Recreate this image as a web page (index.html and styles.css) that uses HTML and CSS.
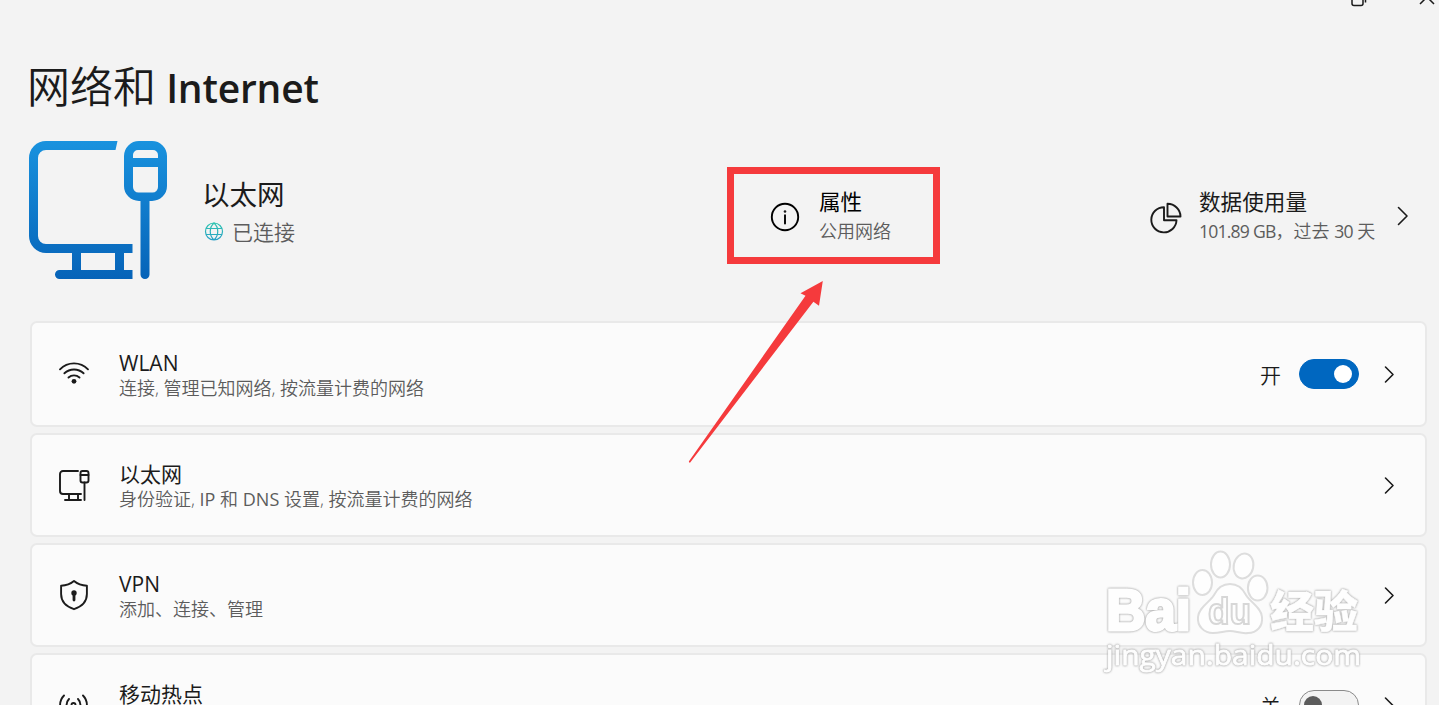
FILE: index.html
```html
<!DOCTYPE html>
<html lang="zh-CN">
<head>
    <meta charset="UTF-8">
    <meta name="viewport" content="width=device-width, initial-scale=1.0">
    <title>网络和 Internet</title>
    <link rel="stylesheet" href="styles.css">
</head>

<body>

<!-- 窗口按钮 -->
<div class="titlebar">
    <svg class="window-button" width="18" height="18" viewBox="0 0 18 18">
        <rect x="2" y="4" width="11" height="12.5" rx="2"/>
        <path d="M5 1.5h8a2.5 2.5 0 0 1 2.5 2.5v9.5"/>
    </svg>
    <svg class="window-button" width="18" height="18" viewBox="0 0 18 18">
        <path d="M2 2l14 14M16 2L2 16"/>
    </svg>
</div>

<main class="page">
    <h1>网络和 <span class="latin">Internet</span></h1>

    <!-- 当前连接状态 -->
    <section class="status">
        <svg class="status-icon" width="138" height="138" viewBox="0 0 138 138">
            <defs>
                <linearGradient id="blue" gradientUnits="userSpaceOnUse" x1="0" y1="0" x2="0" y2="138">
                    <stop offset="0" stop-color="#1992de"/>
                    <stop offset="1" stop-color="#0663b8"/>
                </linearGradient>
            </defs>
            <g fill="url(#blue)">
                <path d="M88.500 0H17A17 17 0 0 0 0 17V95a17 17 0 0 0 17 17H43v17H30.500a4.500 4.500 0 0 0 0 9H103.500v-9H95V112h8.500v-9H17a8 8 0 0 1-8-8V17a8 8 0 0 1 8-8H86.500zM52 112h34v17H52z"/>
                <path fill-rule="evenodd" d="M110 0h13a15 15 0 0 1 15 15v30a15 15 0 0 1-15 15h-2.500v73.500a4.500 4.500 0 0 1-9 0V60h-1.500a15 15 0 0 1-15-15V15a15 15 0 0 1 15-15zM104 17h25v-3a5 5 0 0 0-5-5h-15a5 5 0 0 0-5 5zM104 26v20a5.500 5.500 0 0 0 5.500 5.500h14a5.500 5.500 0 0 0 5.500-5.500V26z"/>
            </g>
        </svg>

        <div class="status-text">
            <div class="status-name">以太网</div>
            <div class="status-state">
                <svg width="20" height="20" viewBox="0 0 20 20">
                    <defs>
                        <linearGradient id="globe" x1="0" y1="0" x2="0" y2="1">
                            <stop offset="0" stop-color="#30c5b0"/>
                            <stop offset="1" stop-color="#279fc6"/>
                        </linearGradient>
                    </defs>
                    <path fill="none" stroke="url(#globe)" stroke-width="1.2" d="M1.500 9.500a8.500 8.500 0 1 0 17 0a8.500 8.500 0 1 0-17 0M2.500 6.500h15M2.500 12.500h15M10 1c-5 4.500-5 12.500 0 17M10 1c5 4.500 5 12.500 0 17"/>
                </svg>
                <span>已连接</span>
            </div>
        </div>

        <div class="tile tile-marked">
            <svg class="line-icon" width="30" height="30" viewBox="0 0 30 30">
                <circle cx="15" cy="15" r="13.200"/>
                <path d="M15 13.200v8.300"/>
                <circle class="solid" cx="15" cy="9.500" r="1.300"/>
            </svg>
            <div class="tile-text">
                <div class="tile-title">属性</div>
                <div class="tile-sub">公用网络</div>
            </div>
        </div>

        <div class="tile tile-usage">
            <svg class="line-icon" width="32" height="32" viewBox="0 0 32 32">
                <path d="M14 5.200A12.600 12.600 0 1 0 26.500 18.300H14z"/>
                <path d="M17.500 1.800A13 13 0 0 1 30.500 14.500H17.500z"/>
            </svg>
            <div class="tile-text">
                <div class="tile-title">数据使用量</div>
                <div class="tile-sub"><span class="amount">101.89 GB</span>，过去 <span class="amount">30</span> 天</div>
            </div>
            <svg class="chevron" width="12" height="20" viewBox="0 0 12 20"><path d="M1.500 1.500L10 10l-8.500 8.500"/></svg>
        </div>
    </section>

    <!-- 设置列表 -->
    <section class="list">
        <div class="card card-first">
            <svg class="line-icon" width="32" height="32" viewBox="0 0 32 32">
                <path d="M2 11.300a19.500 19.500 0 0 1 28 0M6.400 15.300a14 14 0 0 1 19.200 0M10.500 19.500a8.200 8.200 0 0 1 11 0"/>
                <circle class="solid" cx="16" cy="23.300" r="2.400"/>
            </svg>
            <div class="card-text">
                <div class="card-title">WLAN</div>
                <div class="card-sub">连接, 管理已知网络, 按流量计费的网络</div>
            </div>
            <span class="switch-label">开</span>
            <span class="switch switch-on"></span>
            <svg class="chevron" width="12" height="18" viewBox="0 0 12 18"><path d="M2.500 2L10 9.500L2.500 17"/></svg>
        </div>

        <div class="card">
            <svg class="line-icon" width="32" height="32" viewBox="0 0 32 32">
                <path d="M20 2H5a3 3 0 0 0-3 3v17a3 3 0 0 0 3 3h18M11 25v6M20 25v6M7 31h16"/>
                <rect x="22.500" y="2" width="8" height="11.500" rx="2"/>
                <path d="M22.500 6h8M26.500 13.500V31"/>
            </svg>
            <div class="card-text">
                <div class="card-title">以太网</div>
                <div class="card-sub">身份验证, <span class="term">IP</span> 和 <span class="term">DNS</span> 设置, 按流量计费的网络</div>
            </div>
            <svg class="chevron" width="12" height="18" viewBox="0 0 12 18"><path d="M2.500 2L10 9.500L2.500 17"/></svg>
        </div>

        <div class="card">
            <svg class="line-icon" width="32" height="32" viewBox="0 0 32 32">
                <path d="M16 2c3.500 3 8 4.500 12.900 4.700V15c0 7.500-5 12.500-12.900 15.200C8.100 27.500 3.100 22.500 3.100 15V6.700C8 6.500 12.500 5 16 2z"/>
                <circle class="solid" cx="16" cy="14" r="2.700"/>
                <path class="key" d="M16 15v6"/>
            </svg>
            <div class="card-text">
                <div class="card-title">VPN</div>
                <div class="card-sub">添加、连接、管理</div>
            </div>
            <svg class="chevron" width="12" height="18" viewBox="0 0 12 18"><path d="M2.500 2L10 9.500L2.500 17"/></svg>
        </div>

        <div class="card">
            <svg class="line-icon" width="32" height="32" viewBox="0 0 32 32">
                <path d="M6 6.500a13.500 13.500 0 0 0 0 19M25 6.500a13.500 13.500 0 0 1 0 19M11 10a8.500 8.500 0 0 0 0 12M20 10a8.500 8.500 0 0 1 0 12"/>
                <circle cx="15.500" cy="16" r="2"/>
            </svg>
            <div class="card-text">
                <div class="card-title">移动热点</div>
            </div>
            <span class="switch-label">关</span>
            <span class="switch"></span>
            <svg class="chevron" width="12" height="18" viewBox="0 0 12 18"><path d="M2.500 2L10 9.500L2.500 17"/></svg>
        </div>
    </section>
</main>

<!-- 指向“属性”的箭头 -->
<svg class="arrow" width="136" height="184" viewBox="0 0 136 184">
    <path d="M134.800 1L112.500 13.300L117.500 15.800L0.800 181.500L1.800 183L125.400 21.700L131 25.700z"/>
</svg>

<!-- 水印 -->
<svg class="watermark" width="270" height="132" viewBox="0 0 270 132">
    <g class="mark">
        <text class="mark-bai" x="6" y="82" textLength="85" lengthAdjust="spacingAndGlyphs">Bai</text>
        <ellipse cx="102.500" cy="34.500" rx="9.500" ry="12.500"/>
        <ellipse cx="120.500" cy="16.500" rx="9.500" ry="13"/>
        <ellipse cx="143.500" cy="18" rx="9.800" ry="12.500" transform="rotate(12 143.500 18)"/>
        <ellipse cx="157.700" cy="40" rx="9.800" ry="12.500"/>
        <path d="M130 36c-8 0-13 5-16 11-4 7-15 12-16 22-1 9 6 16 15 16 7 0 11-2 17-2s11 3 18 2c9 0 15-7 14-16-1-10-12-15-16-22-3-6-8-11-16-11z"/>
        <text class="mark-du" x="108" y="76" textLength="43" lengthAdjust="spacingAndGlyphs">du</text>
        <text class="mark-cn" x="170" y="80" textLength="88" lengthAdjust="spacingAndGlyphs">经验</text>
        <text class="mark-url" x="6" y="117" textLength="255" lengthAdjust="spacingAndGlyphs">jingyan.baidu.com</text>
    </g>
</svg>

</body>
</html>
```
FILE: styles.css
```css
* {
    box-sizing: border-box;
}

body {
    margin: 0;
    height: 705px;
    overflow: hidden;
    position: relative;
    background-color: #f3f3f3;
    color: #1b1b1b;
    font-family: "Open Sans", "Noto Sans CJK SC", sans-serif;
}

svg {
    display: block;
    flex: none;
    overflow: visible;
}

/* 窗口右上角，只露出按钮的下半部分 */
.titlebar {
    display: flex;
    justify-content: flex-end;
    gap: 50px;
    height: 6px;
    padding-right: 3px;
    align-items: flex-end;
}

.window-button {
    fill: none;
    stroke: #1b1b1b;
    stroke-width: 1.5;
}

.window-button:first-child {
    margin-bottom: -1px;
}

.page {
    height: 699px;
    overflow: hidden;
    padding: 52px 12px 0 30px;
}

h1 {
    margin: -1px 0 0 -3px;
    height: 84px;
    line-height: 60px;
    font-size: 43px;
    font-weight: 350;
    white-space: nowrap;
}

.latin {
    margin-left: -1px;
    font-weight: 600;
    font-size: 39px;
    letter-spacing: -0.2px;
}

/* 状态区 */
.status {
    display: flex;
    height: 180px;
    margin-left: -1px;
}

.status-text {
    width: 524px;
    padding: 34px 0 0 35px;
}

.status-name {
    font-size: 27.500px;
    line-height: 40px;
}

.status-state {
    display: flex;
    align-items: center;
    gap: 8px;
    font-size: 21px;
    line-height: 34px;
    color: #5c5c5c;
    font-weight: 350;
    padding-left: 2px;
}

.tile {
    display: flex;
    white-space: nowrap;
}

.tile-marked {
    width: 213px;
    height: 97px;
    margin: 26px 0 0 36px;
    padding: 14px 0 0 36px;
    border: 7px solid #f53a3c;
    color: #000;
}

.tile-marked .line-icon {
    margin: 14px 19px 0 0;
    stroke: #000;
}

.tile-usage {
    padding: 47px 0 0 210px;
}

.tile-usage .line-icon {
    margin: 14px 17px 0 0;
}

.tile-text {
    flex: none;
}

.tile-usage .tile-text {
    width: 180px;
}

.tile-usage .chevron {
    margin: 18px 0 0 18px;
}

.tile-title {
    font-size: 21.6px;
    line-height: 28px;
}

.tile-sub {
    font-size: 18px;
    line-height: 30px;
    color: #5c5c5c;
    font-weight: 350;
}

.amount {
    font-size: 17.600px;
    font-weight: 400;
    letter-spacing: -0.8px;
}

.term {
    font-weight: 400;
}

/* 图标 */
.line-icon,
.chevron {
    fill: none;
    stroke: #1b1b1b;
    stroke-width: 1.9;
    stroke-linecap: round;
    stroke-linejoin: round;
}

.chevron {
    stroke-width: 1.6;
}

.solid {
    fill: #1b1b1b;
    stroke: none;
}

.key {
    stroke-width: 2.8;
}

/* 卡片列表 */
.list {
    display: flex;
    flex-direction: column;
    gap: 6px;
}

.card {
    display: flex;
    align-items: center;
    flex: none;
    height: 104px;
    padding: 0 30px 0 26px;
    border: 2px solid #e9e9e9;
    border-radius: 7px;
    background-color: #fbfbfb;
}

.card-first {
    height: 106px;
}

.card-text {
    flex: 1;
    height: 50px;
    padding-top: 2px;
    margin-left: 29px;
    white-space: nowrap;
}

.card-title {
    font-size: 21px;
    line-height: 25px;
}

.card-sub {
    font-size: 18px;
    line-height: 25px;
    color: #5c5c5c;
    font-weight: 350;
}

.switch-label {
    font-size: 21px;
    font-weight: 350;
    margin-right: 18px;
}

.switch {
    display: flex;
    align-items: center;
    width: 60px;
    height: 30px;
    margin-right: 24px;
    padding-left: 4px;
    border: 1.500px solid #8a8a8a;
    border-radius: 15px;
    background-color: #f3f3f3;
}

.switch::before {
    content: "";
    width: 18px;
    height: 18px;
    border-radius: 50%;
    background-color: #5c5c5c;
}

.switch-on {
    padding-left: 34px;
    border-color: #0067c0;
    background-color: #0067c0;
}

.switch-on::before {
    background-color: #fff;
}

/* 覆盖在页面上的标注 */
.arrow {
    position: absolute;
    left: 688px;
    top: 280px;
    fill: #f53a3c;
}

.watermark {
    position: absolute;
    left: 1100px;
    top: 548px;
}

.mark {
    fill: #fff;
    stroke: #dadada;
    stroke-width: 2;
    opacity: 0.9;
}

/* 白字外面一圈浅灰色描边 */
.mark text {
    stroke: #fff;
    stroke-width: 2;
    filter: drop-shadow(0 0 1px #aaa) drop-shadow(0 0 0.6px #bbb);
}

.mark .mark-bai {
    font: bold 58px "Liberation Sans", sans-serif;
    stroke-width: 3;
}

.mark .mark-du {
    font: bold 36px "Liberation Sans", sans-serif;
    stroke: #d4d4d4;
    filter: none;
}

.mark .mark-cn {
    font: 900 44px "Noto Sans CJK SC", sans-serif;
    stroke-width: 0.5;
}

.mark .mark-url {
    font: 400 27px "Open Sans", sans-serif;
    stroke-width: 0.8;
}
```
